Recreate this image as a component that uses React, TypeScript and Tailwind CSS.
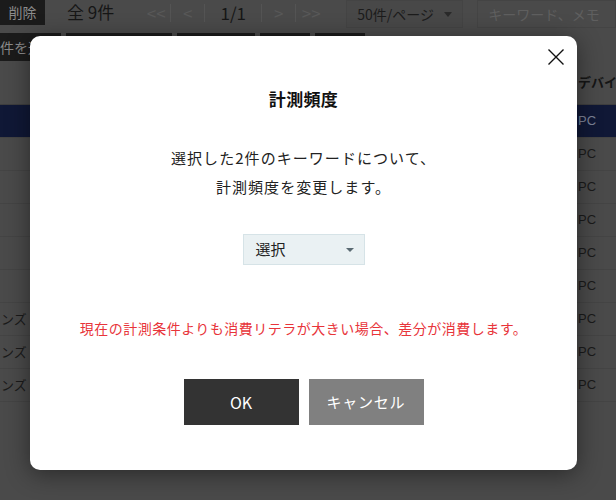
import React from 'react';

const jp = "font-['Noto_Sans_CJK_JP','Noto_Sans',sans-serif]";

const rows = ['', '', '', '', '', '', 'ンズ', 'ンズ', 'ンズ'];

const BackgroundPage: React.FC = () => (
  <div className="flex flex-col">
    {/* Toolbar */}
    <div className="flex items-start h-[32px]">
      <div className="w-[45px] h-[25px] bg-[#1b1b1b] text-[#8c8c8c] text-[14px] flex items-center justify-center">削除</div>
      <div className="ml-[22px] mt-[-1px] text-[17px] text-[#161616] leading-[25px]">全 9件</div>
      <div className="ml-[28px] flex items-center h-[25px] text-[17px] text-[#585858]">
        <span className="w-[28px] text-center">&lt;&lt;</span>
        <span className="w-px h-[18px] bg-[#545454]" />
        <span className="w-[33px] text-center">&lt;</span>
        <span className="w-px h-[18px] bg-[#545454]" />
        <span className="w-[56px] text-center text-[#161616]">1/1</span>
        <span className="w-px h-[18px] bg-[#545454]" />
        <span className="w-[33px] text-center">&gt;</span>
        <span className="w-px h-[18px] bg-[#545454]" />
        <span className="w-[30px] text-center">&gt;&gt;</span>
      </div>
      <div className="ml-[20px] w-[117px] h-[28px] border border-[#444] bg-[#484848] flex items-center pl-[10px] pr-[10px] text-[14px] text-[#1c1c1c]">
        <span className="flex-1">50件/ページ</span>
        <span className="w-0 h-0 border-l-[4px] border-r-[4px] border-t-[5px] border-l-transparent border-r-transparent border-t-[#2a2a2a]" />
      </div>
      <div className="ml-[14px] flex-1 h-[28px] border border-[#444] flex items-center pl-[10px] text-[14px] text-[#5f5f5f]">キーワード、メモ</div>
    </div>
    {/* Action buttons */}
    <div className="flex gap-[5px] h-[28px] mt-px">
      <div className="w-[61px] bg-[#1b1b1b] text-[#8a8a8a] text-[14px] flex items-center overflow-hidden whitespace-nowrap">件を選択</div>
      <div className="w-[106px] bg-[#1b1b1b]" />
      <div className="w-[78px] bg-[#1b1b1b]" />
      <div className="w-[50px] bg-[#1b1b1b]" />
      <div className="w-[50px] bg-[#1b1b1b]" />
    </div>
    {/* Table header */}
    <div className="h-[45px] border-b border-[#3e3e3e] flex items-center justify-end mt-[-1px]">
      <span className="w-[38px] text-[13px] font-bold text-[#151515] whitespace-nowrap">デバイス</span>
    </div>
    {/* Rows */}
    {rows.map((left, i) => (
      <div
        key={i}
        className={`h-[33px] border-b border-[#444] flex items-center ${i === 0 ? 'bg-[#101836]' : ''}`}
      >
        <span className="flex-1 text-[13px] text-[#1a1a1a] pl-px">{left}</span>
        <span className={`w-[38px] font-['Liberation_Sans',sans-serif] text-[13px] ${i === 0 ? 'text-[#7c8296]' : 'text-[#1a1a1a]'}`}>PC</span>
      </div>
    ))}
  </div>
);

const App: React.FC = () => {
  return (
    <div className={`relative w-[616px] h-[500px] overflow-hidden bg-[#4a4a4a] ${jp}`}>
      <BackgroundPage />

      {/* Modal */}
      <div className="absolute left-[30px] top-[36px] w-[547px] h-[434px] bg-white rounded-[10px] shadow-[0_4px_24px_rgba(0,0,0,0.45)] flex flex-col items-center">
        <button className="absolute right-[12px] top-[12px] w-[18px] h-[18px]">
          <svg viewBox="0 0 18 18" className="w-[18px] h-[18px]">
            <path d="M1.5 1.5 L16.5 16.5 M16.5 1.5 L1.5 16.5" stroke="#111" strokeWidth="1.4" fill="none" />
          </svg>
        </button>

        <h2 className="mt-[51px] text-[17px] leading-[24px] font-bold text-[#111] tracking-[0.02em]">計測頻度</h2>

        <p className="mt-[32px] text-center text-[15px] leading-[29px] tracking-[0.07em] text-[#222]">
          選択した2件のキーワードについて、
          <br />
          計測頻度を変更します。
        </p>

        <div className="mt-[33px] w-[122px] h-[31px] bg-[#eaf1f3] border border-[#d6e3e7] flex items-center pl-[12px] pr-[10px]">
          <span className="flex-1 text-[15px] text-[#222]">選択</span>
          <span className="w-0 h-0 border-l-[4px] border-r-[4px] border-t-[4px] border-l-transparent border-r-transparent border-t-[#5a6a72]" />
        </div>

        <p className="mt-[53px] text-[14px] leading-[20px] tracking-[0.035em] text-[#e8343a]">
          現在の計測条件よりも消費リテラが大きい場合、差分が消費します。
        </p>

        <div className="mt-[41px] flex gap-[10px]">
          <button className="w-[115px] h-[46px] bg-[#333333] text-white text-[16px] font-normal">OK</button>
          <button className="w-[115px] h-[46px] bg-[#808080] text-white text-[15px] tracking-[0.05em]">キャンセル</button>
        </div>
      </div>
    </div>
  );
};

export default App;
